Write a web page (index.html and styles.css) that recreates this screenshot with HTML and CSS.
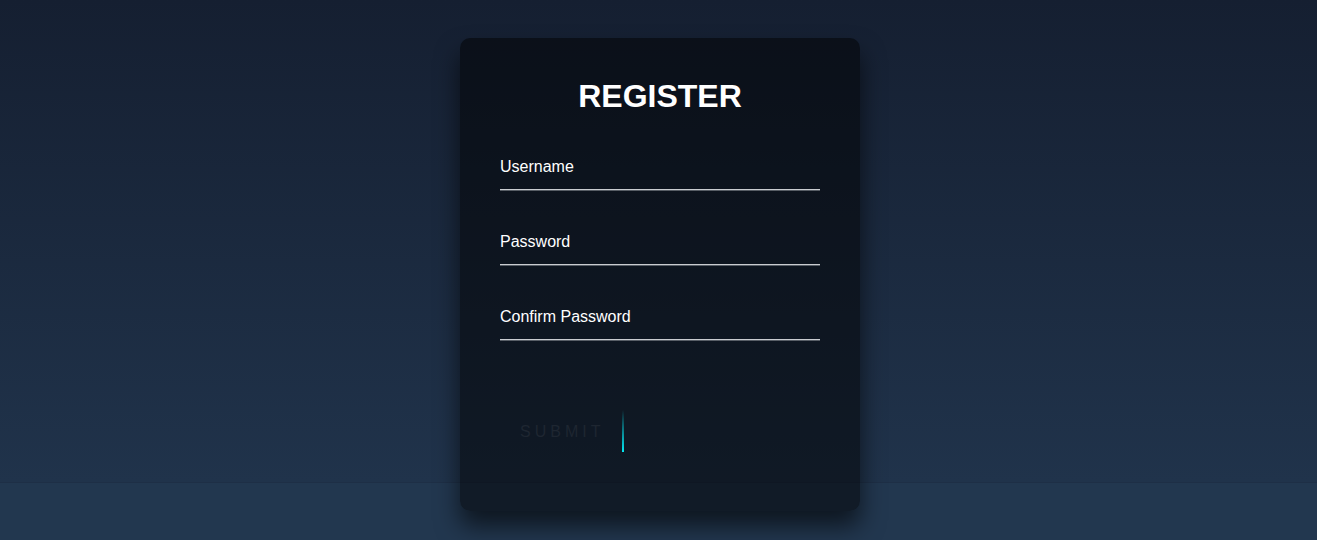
FILE: index.html
```html
<!DOCTYPE html>
<html lang="en">
<head>
<meta charset="utf-8">
<title>Register</title>
<link rel="stylesheet" href="styles.css">
</head>
<body>
<div class="bg">
  <div class="card">
    <h2 class="title">REGISTER</h2>
    <form class="form">
      <div class="field"><label class="label">Username</label></div>
      <div class="field"><label class="label">Password</label></div>
      <div class="field"><label class="label">Confirm Password</label></div>
      <a class="submit" href="#">Submit<span class="beam"></span></a>
    </form>
  </div>
</div>
</body>
</html>
```
FILE: styles.css
```css
html, body {
  margin: 0;
  padding: 0;
}
body {
  background: #22374f;
  font-family: "Liberation Sans", Arial, sans-serif;
  height: 540px;
  overflow: hidden;
}
.bg {
  height: 483px;
  background: linear-gradient(180deg, #151f31 0%, #20334b 100%);
  border-bottom: 1px solid #1e2f46;
  box-sizing: border-box;
  display: flex;
  justify-content: center;
  padding-top: 38px;
  padding-left: 3px;
}
.card {
  width: 400px;
  height: 473px;
  flex: none;
  box-sizing: border-box;
  padding: 40px 40px 0;
  background: rgba(0, 0, 0, 0.5);
  border-radius: 10px;
  box-shadow: 0 15px 25px rgba(0, 0, 0, 0.6);
  position: relative;
  z-index: 1;
}
.title {
  margin: 0 0 31px;
  padding: 0;
  font-size: 32px;
  line-height: 36px;
  font-weight: bold;
  color: #fff;
  text-align: center;
}
.form {
  display: flex;
  flex-direction: column;
  align-items: flex-start;
}
.field {
  width: 100%;
  height: 45px;
  box-sizing: border-box;
  border-bottom: 1px solid #c9ccd0;
  box-shadow: 0 1px 0 rgba(150, 155, 160, 0.55);
  margin-bottom: 30px;
  padding-top: 13px;
}
.label {
  display: block;
  font-size: 16px;
  line-height: 18px;
  color: #fff;
}
.submit {
  position: relative;
  display: inline-block;
  margin-top: 40px;
  padding: 13px 20px 11px;
  font-size: 16px;
  line-height: 18px;
  letter-spacing: 4px;
  text-transform: uppercase;
  text-decoration: none;
  color: #1e2631;
  overflow: hidden;
}
.beam {
  position: absolute;
  right: 0;
  top: 0;
  width: 2px;
  height: 100%;
  background: linear-gradient(180deg, transparent, #03e9f4);
}
```
